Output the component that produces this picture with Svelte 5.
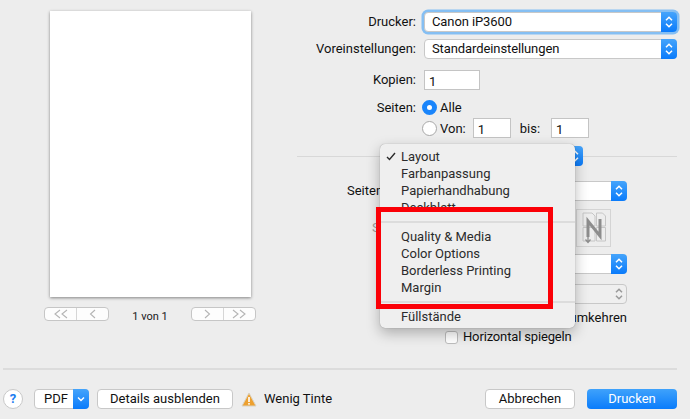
<script lang="ts">
  const menuTop = ['Layout', 'Farbanpassung', 'Papierhandhabung', 'Deckblatt'];
  const menuVendor = ['Quality & Media', 'Color Options', 'Borderless Printing', 'Margin'];
</script>

{#snippet stepper()}
  <span class="stepper">
    <svg width="10" height="14" viewBox="0 0 10 14" fill="none" stroke="currentColor" stroke-width="1.5">
      <path d="M2 5.2 5 2.2 8 5.2" />
      <path d="M2 8.8 5 11.8 8 8.8" />
    </svg>
  </span>
{/snippet}

<div class="dialog">
  <div class="main">
    <div class="preview">
      <div class="page"></div>
      <div class="pager">
        <div class="seg">
          <span class="cell">
            <svg width="18" height="10" viewBox="0 0 18 10"><path d="M8 1 3 5l5 4M15 1l-5 4 5 4" /></svg>
          </span>
          <span class="cell">
            <svg width="10" height="10" viewBox="0 0 10 10"><path d="M7 1 2.500 5 7 9" /></svg>
          </span>
        </div>
        <span class="count">1 von 1</span>
        <div class="seg">
          <span class="cell">
            <svg width="10" height="10" viewBox="0 0 10 10"><path d="M3 1l4.500 4L3 9" /></svg>
          </span>
          <span class="cell">
            <svg width="18" height="10" viewBox="0 0 18 10"><path d="M3 1l5 4-5 4M10 1l5 4-5 4" /></svg>
          </span>
        </div>
      </div>
    </div>

    <div class="form">
      <div class="row first">
        <span class="label">Drucker:</span>
        <div class="select focus"><span>Canon iP3600</span>{@render stepper()}</div>
      </div>
      <div class="row r-preset">
        <span class="label">Voreinstellungen:</span>
        <div class="select"><span>Standardeinstellungen</span>{@render stepper()}</div>
      </div>
      <div class="row r-copies">
        <span class="label">Kopien:</span>
        <div class="input copies">1</div>
      </div>
      <div class="row r-all">
        <span class="label low">Seiten:</span>
        <span class="radio on"></span>
        <span class="low">Alle</span>
      </div>
      <div class="row r-range">
        <span class="label"></span>
        <span class="radio"></span>
        <span class="low">Von:</span>
        <div class="input range">1</div>
        <span class="bis low">bis:</span>
        <div class="input range">1</div>
      </div>

      <div class="pane">
        <div class="pane-select"><div class="select"><span></span>{@render stepper()}</div></div>
        <div class="lrow r-sheets">
          <span class="llabel">Seiten</span>
          <div class="select"><span></span>{@render stepper()}</div>
        </div>
        <div class="lrow r-order">
          <span class="llabel dim">S</span>
          <div class="order">
            <div class="order-icon">
              <svg width="33" height="36" viewBox="0 0 33 36" fill="none">
                <path d="M6 3h9l3 3v10H6zM19.500 3h6l3 3v10h-9zM6 17.500h12V31H6zM19.500 17.500h9V31h-9z" stroke="#c6c6c6" />
                <path d="M11 27V11l12 15V9" stroke="#8d8d8d" stroke-width="3" />
                <path d="M11 24v8M8.500 29.500 11 32.500l2.500-3" stroke="#8d8d8d" stroke-width="1.300" />
              </svg>
            </div>
          </div>
        </div>
        <div class="lrow r-border">
          <span class="llabel"></span>
          <div class="select"><span></span>{@render stepper()}</div>
        </div>
        <div class="lrow r-duplex">
          <span class="llabel"></span>
          <div class="select off"><span></span>{@render stepper()}</div>
        </div>
        <div class="lrow r-flip">
          <span class="llabel"></span>
          <div class="flip-text">umkehren</div>
        </div>
        <div class="lrow r-mirror">
          <span class="llabel"></span>
          <div class="check-row"><span class="check"></span><span>Horizontal spiegeln</span></div>
        </div>
      </div>
    </div>
  </div>

  <div class="footer">
    <span class="help">?</span>
    <div class="pdf">
      <span>PDF</span>
      <span class="pdf-arrow">
        <svg width="8" height="6" viewBox="0 0 8 6" fill="none" stroke="currentColor" stroke-width="1.500"><path d="M1 1.500 4 4.500 7 1.500" /></svg>
      </span>
    </div>
    <span class="btn details">Details ausblenden</span>
    <svg class="warn" width="16" height="15" viewBox="0 0 16 15">
      <path d="M8 1 15 14H1z" fill="#eda02f" stroke="#d9d2c2" stroke-linejoin="round" />
      <rect x="7.200" y="5" width="1.600" height="5" fill="#fff" />
      <rect x="7.200" y="11" width="1.600" height="1.600" fill="#fff" />
    </svg>
    <span class="ink">Wenig Tinte</span>
    <span class="btn cancel">Abbrechen</span>
    <span class="btn primary">Drucken</span>
  </div>

  <div class="menu">
    {#each menuTop as item, i}
      <div class="item">
        {#if i === 0}
          <svg class="tick" width="10" height="9" viewBox="0 0 10 9" fill="none" stroke="#2a2a2a" stroke-width="1.400"><path d="M1 5l2.500 2.500L9 1" /></svg>
        {/if}
        {item}
      </div>
    {/each}
    <div class="sep"></div>
    {#each menuVendor as item}
      <div class="item">{item}</div>
    {/each}
    <div class="sep"></div>
    <div class="item">Füllstände</div>
  </div>

  <div class="highlight"></div>
</div>

<style>
  :global(body) {
    margin: 0;
  }
  .dialog {
    position: relative;
    width: 690px;
    height: 419px;
    overflow: hidden;
    background: #ededed;
    color: #111;
    font-family: Roboto, "Liberation Sans", sans-serif;
    font-size: 13px;
    line-height: 16px;
  }
  .main {
    display: flex;
    height: 368px;
  }
  .preview {
    width: 297px;
    flex: none;
    padding: 11px 0 0 44px;
    box-sizing: border-box;
    display: flex;
    flex-direction: column;
    align-items: flex-start;
  }
  .page {
    width: 201px;
    height: 286px;
    margin-left: 6px;
    background: #fff;
    box-shadow: 0 1px 3px rgba(0, 0, 0, 0.45);
  }
  .pager {
    width: 212px;
    margin-top: 10px;
    display: flex;
    align-items: flex-start;
    justify-content: space-between;
  }
  .seg {
    display: flex;
    width: 65px;
    height: 14px;
    box-sizing: border-box;
    border: 1px solid #c6c6c6;
    border-radius: 4px;
    background: #fdfdfd;
  }
  .cell {
    flex: 1;
    display: flex;
    align-items: center;
    justify-content: center;
  }
  .seg .cell + .cell {
    border-left: 1px solid #d6d6d6;
  }
  .cell svg {
    fill: none;
    stroke: #b4b4b4;
    stroke-width: 1.100;
  }
  .count {
    font-size: 11px;
    margin-top: 2px;
    color: #1a1a1a;
  }
  .form {
    width: 380px;
    display: flex;
    flex-direction: column;
  }
  .row {
    display: flex;
    align-items: center;
    height: 20px;
  }
  .row.first {
    margin-top: 12px;
  }
  .r-preset {
    margin-top: 7px;
  }
  .r-copies {
    margin-top: 11px;
  }
  .r-all {
    margin-top: 7px;
  }
  .r-range {
    margin-top: 1px;
  }
  .low {
    padding-top: 2px;
  }
  .label {
    width: 119px;
    margin-right: 8px;
    flex: none;
    text-align: right;
  }
  .select {
    flex: 1;
    height: 20px;
    box-sizing: border-box;
    display: flex;
    align-items: center;
    justify-content: space-between;
    padding-left: 7px;
    background: #fff;
    border: 1px solid #c8c8c8;
    border-radius: 4px;
    letter-spacing: -0.100px;
  }
  .select.focus {
    box-shadow: 0 0 0 2.500px #85bff3;
  }
  .stepper {
    width: 16px;
    align-self: stretch;
    margin: -1px -1px -1px 0;
    display: flex;
    align-items: center;
    justify-content: center;
    color: #fff;
    background: linear-gradient(#45a4fb, #0a7bfb);
    border-radius: 0 4px 4px 0;
  }
  .input {
    height: 20px;
    box-sizing: border-box;
    padding: 3px 0 0 4px;
    background: #fff;
    border: 1px solid #c4c4c4;
  }
  .copies {
    width: 56px;
  }
  .range {
    width: 38px;
    margin-left: 7px;
  }
  .bis {
    margin-left: 9px;
    margin-right: 4px;
  }
  .radio {
    width: 15px;
    height: 15px;
    margin: 0 3px 0 -2px;
    box-sizing: border-box;
    border: 1px solid #a8a8a8;
    border-radius: 50%;
    background: #fff;
  }
  .radio.on {
    border: 5px solid #1a85fb;
  }
  .pane {
    margin-top: 18px;
    border-top: 1px solid #d8d8d8;
    display: flex;
    flex-direction: column;
  }
  .pane-select {
    display: flex;
    justify-content: flex-end;
    width: 286px;
    margin-top: -11px;
    height: 20px;
  }
  .pane-select .select {
    flex: none;
    width: 200px;
  }
  .lrow {
    display: flex;
    align-items: center;
    width: 330px;
  }
  .llabel {
    width: 103px;
    margin-left: 50px;
    flex: none;
  }
  .llabel.dim {
    margin-left: 75px;
    width: 78px;
    color: #9a9a9a;
  }
  .r-sheets {
    margin-top: 15px;
    height: 20px;
  }
  .r-order {
    margin-top: 8px;
    height: 38px;
  }
  .order {
    flex: 1;
    display: flex;
    justify-content: flex-end;
    padding-right: 16px;
  }
  .order-icon {
    width: 35px;
    height: 38px;
    box-sizing: border-box;
    border: 1px solid #d4d4d4;
  }
  .r-border {
    margin-top: 7px;
    height: 20px;
  }
  .r-duplex {
    margin-top: 10px;
    height: 20px;
  }
  .select.off {
    background: #efefef;
  }
  .select.off .stepper {
    color: #9a9a9a;
    background: none;
  }
  .r-flip {
    margin-top: 4px;
    height: 20px;
  }
  .flip-text {
    flex: 1;
    text-align: right;
  }
  .r-mirror {
    height: 18px;
  }
  .check-row {
    display: flex;
    align-items: center;
    gap: 5px;
    margin-left: -5px;
    white-space: nowrap;
    letter-spacing: -0.150px;
  }
  .check {
    width: 13px;
    height: 13px;
    box-sizing: border-box;
    border: 1px solid #bdbdbd;
    border-radius: 3px;
    background: #fff;
  }
  .footer {
    margin: 0 13px 0 3px;
    border-top: 2px solid #dcdcdc;
    padding-top: 19px;
    display: flex;
    align-items: center;
  }
  .help {
    width: 20px;
    height: 20px;
    box-sizing: border-box;
    border: 1px solid #c8c8c8;
    border-radius: 50%;
    background: #fff;
    color: #1a7cf0;
    font-weight: 700;
    text-align: center;
    line-height: 18px;
  }
  .pdf {
    margin-left: 11px;
    width: 55px;
    height: 20px;
    box-sizing: border-box;
    display: flex;
    align-items: center;
    justify-content: space-between;
    padding-left: 9px;
    background: #fff;
    border: 1px solid #c8c8c8;
    border-radius: 4px;
  }
  .pdf-arrow {
    width: 16px;
    align-self: stretch;
    margin: -1px -1px -1px 0;
    display: flex;
    align-items: center;
    justify-content: center;
    color: #fff;
    background: linear-gradient(#45a4fb, #0a7bfb);
    border-radius: 0 4px 4px 0;
  }
  .btn {
    height: 20px;
    box-sizing: border-box;
    display: flex;
    align-items: center;
    justify-content: center;
    background: #fff;
    border: 1px solid #c8c8c8;
    border-radius: 4px;
  }
  .details {
    margin-left: 8px;
    width: 136px;
  }
  .warn {
    margin-left: 8px;
  }
  .ink {
    margin-left: 7px;
  }
  .cancel {
    margin-left: auto;
    width: 90px;
  }
  .primary {
    margin-left: 12px;
    width: 90px;
    color: #fff;
    border: none;
    background: linear-gradient(#3fa2fb, #0a7cfb);
  }
  .menu {
    position: absolute;
    left: 380px;
    top: 144px;
    width: 195px;
    height: 184px;
    box-sizing: border-box;
    padding-top: 4px;
    background: #efefef;
    border-radius: 5px;
    box-shadow: 0 0 1px rgba(0, 0, 0, 0.4), 0 5px 14px rgba(0, 0, 0, 0.28);
    color: #2b2b2b;
  }
  .item {
    position: relative;
    height: 17px;
    line-height: 17px;
    padding-left: 21px;
    white-space: nowrap;
  }
  .tick {
    position: absolute;
    left: 6px;
    top: 4px;
  }
  .sep {
    height: 2px;
    margin: 5px 0;
    background: #dcdcdc;
  }
  .highlight {
    position: absolute;
    left: 376px;
    top: 207px;
    width: 177px;
    height: 102px;
    box-sizing: border-box;
    border: 5px solid #fb0007;
  }
</style>
